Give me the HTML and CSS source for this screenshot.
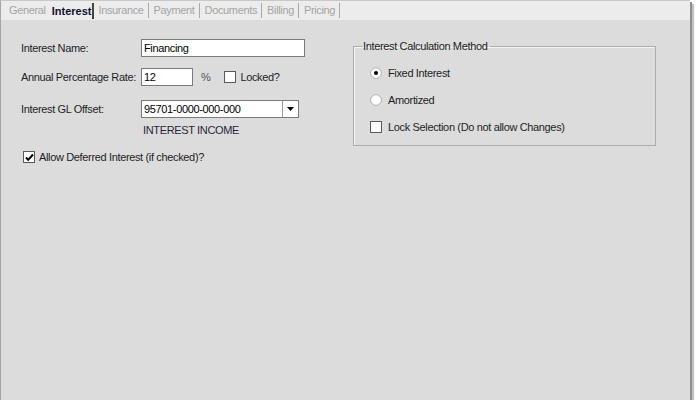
FILE: index.html
```html
<!DOCTYPE html>
<html lang="en">
<head>
    <meta charset="UTF-8">
    <title>Interest</title>
    <link rel="stylesheet" href="styles.css">
</head>
<body>
    <div class="window">
        <div class="tabs">
            <span class="tab first">General</span>
            <span class="tab active">Interest</span>
            <span class="tab">Insurance</span>
            <span class="tab">Payment</span>
            <span class="tab">Documents</span>
            <span class="tab">Billing</span>
            <span class="tab">Pricing</span>
        </div>
        <div class="content">
            <div class="form">
                <div class="row">
                    <span class="label">Interest Name:</span>
                    <div class="textbox name">Financing</div>
                </div>
                <div class="row row-rate">
                    <span class="label">Annual Percentage Rate:</span>
                    <div class="textbox rate">12</div>
                    <span class="pct">%</span>
                    <span class="check"></span>
                    <span class="check-text">Locked?</span>
                </div>
                <div class="row row-gl">
                    <span class="label">Interest GL Offset:</span>
                    <div class="combo">
                        <span class="combo-value">95701-0000-000-000</span>
                        <span class="combo-btn">
                            <svg width="7" height="4" viewBox="0 0 7 4"><path d="M0 0h7L3.5 4z" fill="#000"/></svg>
                        </span>
                    </div>
                </div>
                <div class="gl-name">INTEREST INCOME</div>
                <div class="deferred">
                    <span class="check checked">
                        <svg width="9" height="9" viewBox="0 0 9 9"><path d="M1 4.5l2.2 2.3L8 1.5" fill="none" stroke="#000" stroke-width="2"/></svg>
                    </span>
                    <span class="check-text">Allow Deferred Interest (if checked)?</span>
                </div>
            </div>
            <fieldset class="calc">
                <legend>Interest Calculation Method</legend>
                <div class="option">
                    <span class="radio on"></span>
                    <span>Fixed Interest</span>
                </div>
                <div class="option">
                    <span class="radio"></span>
                    <span>Amortized</span>
                </div>
                <div class="option">
                    <span class="check"></span>
                    <span class="check-text">Lock Selection (Do not allow Changes)</span>
                </div>
            </fieldset>
        </div>
    </div>
</body>
</html>
```

FILE: styles.css
```css
body {
    margin: 0;
    background: #ffffff;
    font-family: "Liberation Sans", Arial, sans-serif;
    font-size: 11px;
    letter-spacing: -0.35px;
    white-space: nowrap;
    color: #1e1e1e;
}
.window {
    width: 689px;
    height: 399px;
    border-left: 1px solid #a6a6a6;
    border-top: 1px solid #c8c8c8;
    background: #dcdcdc;
    box-shadow: 2px 2px 0 #8e8e8e, 4px 4px 1px #c2c2c2;
}
.tabs {
    height: 19px;
    background: #ececec;
    display: flex;
    align-items: center;
    padding-left: 8px;
    color: #a4a4a4;
}
.tab {
    padding: 0 4px 0 5px;
    line-height: 15px;
    border-right: 1px solid #a8a8a8;
}
.tab.first {
    padding-left: 0;
    border-right: none;
    margin-right: 2px;
}
.tab.active {
    color: #101030;
    font-weight: bold;
    letter-spacing: 0;
    padding: 0 1px 0 0;
    border-right: 2px solid #444444;
    line-height: 16px;
}
.tab.active + .tab {
    padding-left: 4px;
}
.content {
    display: flex;
    align-items: flex-start;
}
.form {
    width: 331px;
    padding: 19px 0 0 20px;
    box-sizing: border-box;
}
.row {
    display: flex;
    align-items: center;
    height: 18px;
    margin-bottom: 11px;
}
.row-rate {
    margin-bottom: 14px;
}
.row-gl {
    margin-bottom: 5px;
}
.label {
    width: 120px;
    flex: none;
}
.textbox {
    height: 18px;
    box-sizing: border-box;
    border: 1px solid #7a7a7a;
    background: #ffffff;
    color: #000;
    padding: 0 2px;
    line-height: 16px;
}
.name {
    width: 164px;
}
.rate {
    width: 52px;
}
.pct {
    margin-left: 8px;
    color: #555;
}
.row .check {
    margin-left: 14px;
}
.check {
    width: 12px;
    height: 12px;
    box-sizing: border-box;
    border: 1px solid #5a5a5a;
    background: #ffffff;
    display: inline-flex;
    align-items: center;
    justify-content: center;
    flex: none;
}
.check-text {
    margin-left: 4px;
}
.combo {
    width: 158px;
    height: 18px;
    box-sizing: border-box;
    border: 1px solid #7a7a7a;
    background: #ffffff;
    display: flex;
    color: #000;
}
.combo-value {
    flex: 1;
    padding-left: 2px;
    line-height: 16px;
}
.combo-btn {
    width: 15px;
    border-left: 1px solid #9a9a9a;
    display: flex;
    align-items: center;
    justify-content: center;
}
.gl-name {
    margin-left: 122px;
    line-height: 14px;
    color: #2a2538;
}
.deferred {
    display: flex;
    align-items: center;
    margin: 14px 0 0 2px;
}
.calc {
    margin: 20px 0 0 21px;
    padding: 13px 0 10px 16px;
    width: 303px;
    height: 106px;
    box-sizing: border-box;
    border: 1px solid #adadad;
    box-shadow: inset 1px 1px 0 #f4f4f4;
}
.calc legend {
    padding: 0 3px 0 1px;
    margin-left: -8px;
    line-height: 13px;
    color: #1e1e1e;
}
.option {
    display: flex;
    align-items: center;
    height: 14px;
    margin-bottom: 13px;
}
.option .check-text {
    margin-left: 6px;
}
.radio {
    width: 12px;
    height: 12px;
    box-sizing: border-box;
    border-radius: 50%;
    background: radial-gradient(circle, #ffffff 55%, #e6e6e6 75%, #c8c8c8 100%);
    border: 1px solid #b8b8b8;
    display: inline-flex;
    align-items: center;
    justify-content: center;
    margin-right: 6px;
    flex: none;
}
.radio.on::after {
    content: "";
    width: 4px;
    height: 4px;
    border-radius: 50%;
    background: #000;
}
```
